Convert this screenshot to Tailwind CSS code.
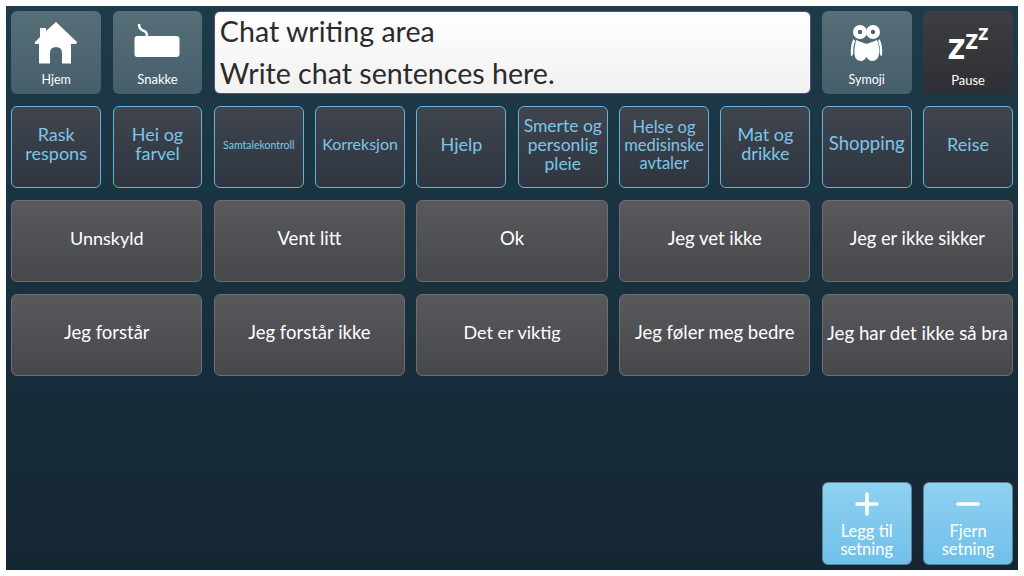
<!DOCTYPE html>
<html lang="en">
  <head>
    <meta charset="UTF-8" />
    <title>Chat</title>
    <script src="https://cdn.jsdelivr.net/npm/@tailwindcss/browser@4"></script>
  </head>
  <body class="bg-white overflow-hidden font-['Lato',sans-serif]">
    <div class="mt-[6px] ml-[6px] w-[1012px] h-[564px] pt-[5px] pb-[5px] pl-[5.2px] pr-[5px] bg-gradient-to-b from-[#1d3b49] to-[#152633] grid grid-cols-10 grid-rows-[83px_82px_82px_82px_82px_83px] gap-x-[11.4px] gap-y-[12px]">
      <!-- top row -->
      <button class="rounded-md bg-gradient-to-b from-[#566e78] to-[#475f6a] text-white text-[12.5px] flex flex-col items-center pt-[9px]">
        <svg class="w-[44px] h-[44px]" viewBox="0 0 44 44" fill="#fff"><path d="M22 2 L43 22 Q43 24 41 24 H37 V43.5 H28 V33 Q28 27 22 27 Q16 27 16 33 V43.5 H5 V24 H2 Q0 24 1 22 L6 17 V8 H12 V11 Z"/></svg>
        <span class="mt-[7px]">Hjem</span>
      </button>
      <button class="rounded-md bg-gradient-to-b from-[#566e78] to-[#475f6a] text-white text-[13px] flex flex-col items-center pt-[9px]">
        <svg class="w-[46px] h-[44px]" viewBox="0 0 46 44"><path d="M5 4 Q5 9 9 10.5 Q13 11.5 13 16" fill="none" stroke="#fff" stroke-width="2.5"/><rect x="0.5" y="16" width="45" height="21" rx="3" fill="#fff"/></svg>
        <span class="mt-[6px]">Snakke</span>
      </button>
      <div class="col-span-6 -mr-[1px] rounded-md border border-[#5b4a8c] bg-gradient-to-b from-white to-[#f1f1f1] text-[#2b2b2b] text-[28.6px] leading-[42px] px-[5px]">
        <p class="-mt-[2px]">Chat writing area</p>
        <p>Write chat sentences here.</p>
      </div>
      <button class="rounded-md bg-gradient-to-b from-[#566e78] to-[#475f6a] text-white text-[12.5px] flex flex-col items-center pt-[9px]">
        <svg class="w-[44px] h-[44px]" viewBox="0 0 44 44">
          <path d="M11 20 Q21.5 26 32 20 Q35 28 34 34 Q33 41 27 41 Q24 41 21.5 37 Q19 41 16 41 Q10 41 9.5 34 Q9 28 11 20 Z" fill="#fff"/>
          <path d="M8.5 19 Q5 25 6 36 Q8 36 8.3 33 Q7.5 27 10 21 Z M34.5 19 Q38 25 37 36 Q35 36 34.7 33 Q35.5 27 33 21 Z" fill="#fff"/>
          <circle cx="15" cy="12" r="7" fill="#fff"/><circle cx="28" cy="12" r="7" fill="#fff"/>
          <circle cx="15" cy="12" r="2.2" fill="#4e6671"/><circle cx="28" cy="12" r="2.2" fill="#4e6671"/>
          <path d="M17 21 Q21.5 25 26 21" fill="none" stroke="#4e6671" stroke-width="1.3"/>
        </svg>
        <span class="mt-[7px]">Symoji</span>
      </button>
      <button class="rounded-md bg-gradient-to-b from-[#3e3e42] to-[#2e2f34] text-white text-[13px] flex flex-col items-center pt-[9px]">
        <span class="h-[44px] w-[46px] flex items-baseline justify-center font-black leading-[48px]">
          <span class="text-[38px]">z</span><span class="text-[28px] -translate-y-[10px]">z</span><span class="text-[22px] -translate-y-[19px]">z</span>
        </span>
        <span class="mt-[7px]">Pause</span>
      </button>

      <!-- categories -->
      <button class="rounded-md border border-[#66b3d8] bg-gradient-to-b from-[#40454e] to-[#2f3640] text-[#7cc6ea] pb-[6px] text-[18px] leading-[19px]">Rask respons</button>
      <button class="rounded-md border border-[#66b3d8] bg-gradient-to-b from-[#40454e] to-[#2f3640] text-[#7cc6ea] pb-[6px] text-[18px] leading-[19px] px-4">Hei og farvel</button>
      <button class="rounded-md border border-[#66b3d8] bg-gradient-to-b from-[#40454e] to-[#2f3640] text-[#7cc6ea] pb-[3px] text-[10.5px]">Samtalekontroll</button>
      <button class="rounded-md border border-[#66b3d8] bg-gradient-to-b from-[#40454e] to-[#2f3640] text-[#7cc6ea] pb-[6px] text-[16px]">Korreksjon</button>
      <button class="rounded-md border border-[#66b3d8] bg-gradient-to-b from-[#40454e] to-[#2f3640] text-[#7cc6ea] pb-[6px] text-[18px]">Hjelp</button>
      <button class="rounded-md border border-[#66b3d8] bg-gradient-to-b from-[#40454e] to-[#2f3640] text-[#7cc6ea] pb-[6px] text-[17.5px] leading-[19px]">Smerte og personlig pleie</button>
      <button class="rounded-md border border-[#66b3d8] bg-gradient-to-b from-[#40454e] to-[#2f3640] text-[#7cc6ea] pb-[4px] text-[16.5px] leading-[18px]">Helse og medisinske avtaler</button>
      <button class="rounded-md border border-[#66b3d8] bg-gradient-to-b from-[#40454e] to-[#2f3640] text-[#7cc6ea] pb-[6px] text-[18px] leading-[19px] px-4">Mat og drikke</button>
      <button class="rounded-md border border-[#66b3d8] bg-gradient-to-b from-[#40454e] to-[#2f3640] text-[#7cc6ea] pb-[6px] text-[18.5px]">Shopping</button>
      <button class="rounded-md border border-[#66b3d8] bg-gradient-to-b from-[#40454e] to-[#2f3640] text-[#7cc6ea] pb-[6px] text-[18px]">Reise</button>

      <!-- phrases -->
      <button class="col-span-2 rounded-md border border-[#6c6e71] bg-gradient-to-b from-[#59595d] to-[#47484c] text-white pb-[6px] text-[18px]">Unnskyld</button>
      <button class="col-span-2 rounded-md border border-[#6c6e71] bg-gradient-to-b from-[#59595d] to-[#47484c] text-white pb-[4px] text-[18.5px]">Vent litt</button>
      <button class="col-span-2 rounded-md border border-[#6c6e71] bg-gradient-to-b from-[#59595d] to-[#47484c] text-white pb-[4px] text-[18.5px]">Ok</button>
      <button class="col-span-2 rounded-md border border-[#6c6e71] bg-gradient-to-b from-[#59595d] to-[#47484c] text-white pb-[4px] text-[18.5px]">Jeg vet ikke</button>
      <button class="col-span-2 rounded-md border border-[#6c6e71] bg-gradient-to-b from-[#59595d] to-[#47484c] text-white pb-[4px] text-[18.3px]">Jeg er ikke sikker</button>
      <button class="col-span-2 rounded-md border border-[#6c6e71] bg-gradient-to-b from-[#59595d] to-[#47484c] text-white pb-[4px] text-[18.5px]">Jeg forstår</button>
      <button class="col-span-2 rounded-md border border-[#6c6e71] bg-gradient-to-b from-[#59595d] to-[#47484c] text-white pb-[4px] text-[18.5px]">Jeg forstår ikke</button>
      <button class="col-span-2 rounded-md border border-[#6c6e71] bg-gradient-to-b from-[#59595d] to-[#47484c] text-white pb-[6px] text-[18px]">Det er viktig</button>
      <button class="col-span-2 rounded-md border border-[#6c6e71] bg-gradient-to-b from-[#59595d] to-[#47484c] text-white pb-[4px] text-[18.5px]">Jeg føler meg bedre</button>
      <button class="col-span-2 rounded-md border border-[#6c6e71] bg-gradient-to-b from-[#59595d] to-[#47484c] text-white pb-[4px] text-[18.7px] whitespace-nowrap">Jeg har det ikke så bra</button>

      <!-- bottom right -->
      <button class="col-start-9 row-start-6 rounded-md border border-[#5f8296] bg-gradient-to-b from-[#8fd1f0] to-[#70c0ea] text-white text-[16.5px] leading-[18px] flex flex-col items-center pt-[9px]">
        <svg class="w-[24px] h-[24px]" viewBox="0 0 24 24"><path d="M12 2 V22 M2 12 H22" stroke="#fff" stroke-width="3.5" stroke-linecap="round"/></svg>
        <span class="mt-[6px]">Legg til<br />setning</span>
      </button>
      <button class="col-start-10 row-start-6 rounded-md border border-[#5f8296] bg-gradient-to-b from-[#8fd1f0] to-[#70c0ea] text-white text-[16.5px] leading-[18px] flex flex-col items-center pt-[9px]">
        <svg class="w-[24px] h-[24px]" viewBox="0 0 24 24"><path d="M2 12 H22" stroke="#fff" stroke-width="3.5" stroke-linecap="round"/></svg>
        <span class="mt-[6px]">Fjern<br />setning</span>
      </button>
    </div>
  </body>
</html>
